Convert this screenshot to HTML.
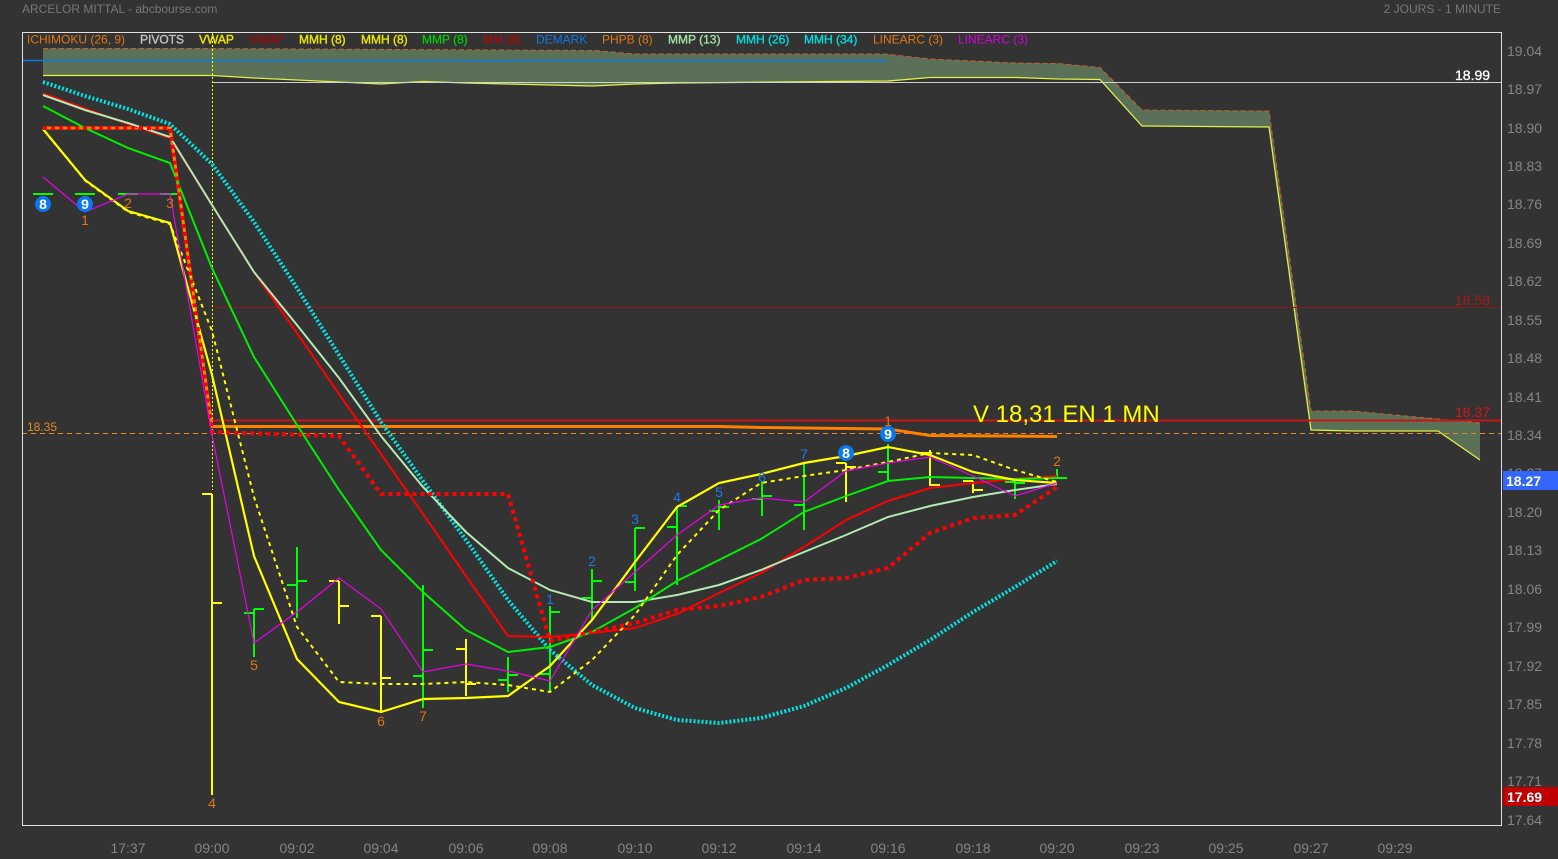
<!DOCTYPE html>
<html><head><meta charset="utf-8">
<style>
html,body{margin:0;padding:0;background:#333;width:1558px;height:859px;overflow:hidden}
svg{display:block;font-family:"Liberation Sans",Arial,sans-serif}
</style></head><body>
<svg width="1558" height="859" viewBox="0 0 1558 859" xmlns="http://www.w3.org/2000/svg">
<rect width="1558" height="859" fill="#333"/>
<text x="22" y="13" font-size="12" fill="#777">ARCELOR MITTAL - abcbourse.com</text>
<text x="1501" y="13" font-size="12" fill="#777" text-anchor="end">2 JOURS - 1 MINUTE</text>

<!-- cloud -->
<path d="M43,48.5 L212,48.5 L595,50.5 L635,54 L885,54 L930,59 L1015,63 L1058,63.5 L1100,67.5 L1142,110 L1269,111 L1311,411 L1353,411 L1438,419 L1480,423 L1480,460 L1438,431 L1353,431 L1311,430 L1269,127 L1142,126 L1100,79.5 L1058,79 L1015,77.5 L930,77.5 L888,81 L677,83 L635,84 L592,86 L550,85 L508,84 L466,83 L423,81.5 L381,84 L339,82 L297,80 L254,78 L212,75.5 L43,75.5 Z" fill="#5a7158"/>
<path d="M43,48.5 L212,48.5 L595,50.5 L635,54 L885,54 L930,59 L1015,63 L1058,63.5 L1100,67.5 L1142,110 L1269,111 L1311,411 L1353,411 L1438,419 L1480,423" fill="none" stroke="#c8602e" stroke-width="1" stroke-dasharray="5 3"/>
<path d="M43,75.5 L212,75.5 L254,78 L297,80 L339,82 L381,84 L423,81.5 L466,83 L508,84 L550,85 L592,86 L635,84 L677,83 L888,81 L930,77.5 L1015,77.5 L1058,79 L1100,79.5 L1142,126 L1269,127 L1311,430 L1353,431 L1438,431 L1480,460" fill="none" stroke="#e2f048" stroke-width="1.3"/>

<!-- horizontal levels -->
<path d="M22,60.5 H887" stroke="#0a7ae8" stroke-width="1.4"/>
<g shape-rendering="crispEdges">
<path d="M212,82.5 H1501" stroke="#d0d0d0" stroke-width="1"/>
<path d="M212,307.5 H1501" stroke="#8a1a1a" stroke-width="1"/>
<path d="M212,420.5 H1501" stroke="#c81414" stroke-width="2"/>
<path d="M22,433.5 H1501" stroke="#e08a30" stroke-width="1" stroke-dasharray="5 4"/>
</g>
<path d="M212.5,33 V490" stroke="#ffff00" stroke-width="1" stroke-dasharray="2 2" shape-rendering="crispEdges"/>

<!-- orange thick -->
<path d="M43,128 L170,128 L212,426.5 L720,426.5 L762,427.5 L846,428.5 L888,429 L930,435.5 L1057,436.5" fill="none" stroke="#ff8000" stroke-width="3"/>

<!-- bars -->
<g fill="none" stroke-width="2" shape-rendering="crispEdges">
<g stroke="#00ff00" stroke-width="2">
<path d="M33,194H53M75,194H95M118,194H138M160,194H180"/>
<path d="M254,609V657M244,613H254M254,609H264"/>
<path d="M297,547V618M287,585H297M297,581H307"/>
<path d="M423,585V708M413,676H423M423,650H433"/>
<path d="M508,657V692M498,680H508M508,675H518"/>
<path d="M550,606V692M540,674H550M550,612H560"/>
<path d="M592,569V620M582,598H592M592,581H602"/>
<path d="M635,528V591M625,582H635M635,528H645"/>
<path d="M677,506V585M667,527H677M677,506H687"/>
<path d="M719,500V530M709,511H719M719,507H729"/>
<path d="M762,482V516M752,499H762M762,496H772"/>
<path d="M804,463V530M794,505H804"/>
<path d="M888,444V480M878,472H888"/>
<path d="M1015,480V499M1005,482H1015M1015,483H1025"/>
<path d="M1057,469V478M1047,478H1067"/>
</g>
<g stroke="#ffff00">
<path d="M212,494V795M202,494H212M212,603H222"/>
<path d="M339,581V624M329,581H339M339,606H349"/>
<path d="M381,616V712M371,616H381M381,678H391"/>
<path d="M466,639V696M456,649H466M466,684H476"/>
<path d="M846,463V502M836,463H846M846,467H856"/>
<path d="M930,450V486M920,453H930M930,485H940"/>
<path d="M973,481V493M963,481H973M973,490H983"/>
</g>
</g>

<!-- MMH 34 cyan -->
<path d="M43,82 L85,96 L128,109 L170,124 L212,164 L254,222 L297,288 L339,355 L381,422 L423,481 L466,540 L508,600 L550,650 L592,685 L635,708 L677,720 L719,723 L761,718 L804,706 L846,688 L888,665 L930,640 L973,612 L1015,587 L1057,561" fill="none" stroke="#00e6e6" stroke-width="4" stroke-dasharray="2 2"/>
<!-- MM red -->
<path d="M43,93.5 L128,124 L170,138 L212,205 L254,272 L297,333 L339,394 L381,454 L423,514 L466,576 L508,636 L550,637 L592,633 L635,628 L677,614 L719,593 L761,573 L804,547 L846,520 L888,501 L930,488 L973,483 L1015,479 L1057,476" fill="none" stroke="#ff0000" stroke-width="2"/>
<!-- MMP 13 -->
<path d="M43,95 L85,110 L128,123 L170,137 L212,205 L254,272 L297,325 L339,378 L381,436 L423,487 L466,532 L508,568 L550,590 L592,602 L635,602 L677,595 L719,585 L761,570 L804,552 L846,535 L888,517 L930,506 L973,497 L1015,490 L1057,484" fill="none" stroke="#b4e8b4" stroke-width="2"/>
<!-- MMP 8 -->
<path d="M43,106 L85,128 L128,148 L170,163 L212,268 L254,357 L297,425 L339,490 L381,550 L423,592 L466,630 L508,652 L550,647 L592,632 L635,608 L677,581 L719,560 L761,539 L804,512 L846,496 L888,481 L930,477 L973,478 L1015,479 L1057,478" fill="none" stroke="#00f000" stroke-width="2"/>
<!-- yellow dashed -->
<path d="M43.6,130 L85.6,181 L128.4,212 L170,224 L212,331 L254,497 L297,627 L339,682 L381,684 L423,684 L466,682 L508,685 L550,692 L592,660 L635,615 L677,555 L719,510 L761,483 L804,476 L846,470 L888,462 L930,453 L973,455 L1015,470 L1057,482" fill="none" stroke="#ffff00" stroke-width="2" stroke-dasharray="4 4"/>
<!-- yellow thick -->
<path d="M43,129 L85,180 L128,211 L170,223 L212,375 L254,556 L297,659 L339,702 L381,712 L423,699 L466,698 L508,696 L550,666 L592,620 L635,562 L677,507 L719,483 L761,474 L804,463 L846,456 L888,447 L930,455 L973,472 L1015,480 L1057,483" fill="none" stroke="#ffff00" stroke-width="2.2"/>
<!-- red dotted -->
<path d="M43,128 L170,128 L212,432 L339,436 L381,494 L508,494 L550,641 L592,632 L635,623 L677,610 L719,606 L761,597 L804,580 L846,578 L888,568 L930,533 L973,518 L1015,515 L1057,487" fill="none" stroke="#ff0000" stroke-width="4" stroke-dasharray="4 4"/>
<!-- linearc -->
<path d="M43,177 L85,212 L128,194 L170,194 L212,435 L254,643 L297,612 L339,578 L381,609 L423,672 L466,664 L508,671 L550,681 L592,610 L635,572 L677,535 L719,505 L761,498 L804,502 L846,471 L888,463 L930,457 L973,476 L1015,496 L1057,483" fill="none" stroke="#e800e8" stroke-width="1.2"/>

<!-- demark numbers -->
<g font-size="14" text-anchor="middle" fill="#e0750f">
<text x="85" y="225">1</text><text x="128" y="208">2</text><text x="170" y="208">3</text><text x="212" y="808">4</text>
<text x="254" y="670">5</text><text x="381" y="726">6</text><text x="423" y="721">7</text>
<text x="888" y="426">1</text><text x="1057" y="466">2</text>
</g>
<g font-size="14" text-anchor="middle" fill="#1a78e8">
<text x="550" y="604">1</text><text x="592" y="566">2</text><text x="635" y="524">3</text><text x="677" y="502">4</text>
<text x="719" y="497">5</text><text x="762" y="482">6</text><text x="804" y="459">7</text>
</g>
<g fill="#0a78ee">
<circle cx="43" cy="204" r="8"/><circle cx="85" cy="204" r="8"/><circle cx="846" cy="453" r="8"/><circle cx="888" cy="434" r="8"/>
</g>
<g font-size="14" font-weight="bold" text-anchor="middle" fill="#fff">
<text x="43" y="209">8</text><text x="85" y="209">9</text><text x="846" y="458">8</text><text x="888" y="439">9</text>
</g>

<!-- frame -->
<rect x="22.5" y="32.5" width="1479" height="793" fill="none" stroke="#e0e0e0" stroke-width="1" shape-rendering="crispEdges"/>

<!-- legend -->
<g font-size="12">
<text x="27" y="43.5" fill="#e27810">ICHIMOKU (26, 9)</text>
<text x="140" y="43.5" fill="#c0c0c0" stroke="#c0c0c0" stroke-width=".4">PIVOTS</text>
<text x="199" y="43.5" fill="#e6e600" stroke="#e6e600" stroke-width=".4">VWAP</text>
<text x="249" y="43.5" fill="#b80000">VWAP</text>
<text x="299" y="43.5" fill="#e6e600" stroke="#e6e600" stroke-width=".4">MMH (8)</text>
<text x="361" y="43.5" fill="#e6e600" stroke="#e6e600" stroke-width=".4">MMH (8)</text>
<text x="422" y="43.5" fill="#00d000" stroke="#00d000" stroke-width=".25">MMP (8)</text>
<text x="483" y="43.5" fill="#c40000">MM (8)</text>
<text x="536" y="43.5" fill="#0a78e8">DEMARK</text>
<text x="602" y="43.5" fill="#e27810">PHPB (8)</text>
<text x="668" y="43.5" fill="#a5e0a5" stroke="#a5e0a5" stroke-width=".35">MMP (13)</text>
<text x="736" y="43.5" fill="#00dcdc" stroke="#00dcdc" stroke-width=".35">MMH (26)</text>
<text x="804" y="43.5" fill="#00dcdc" stroke="#00dcdc" stroke-width=".35">MMH (34)</text>
<text x="873" y="43.5" fill="#e27810">LINEARC (3)</text>
<text x="958" y="43.5" fill="#d800d8">LINEARC (3)</text>
</g>

<!-- annotations -->
<text x="27" y="431" font-size="12" fill="#e08a20">18.35</text>
<text x="973" y="422" font-size="24" fill="#ffff00">V 18,31 EN 1 MN</text>
<text x="1455" y="80" font-size="14" fill="#fff" stroke="#fff" stroke-width=".3">18.99</text>
<text x="1455" y="305" font-size="14" fill="#a01c1c">18.58</text>
<text x="1455" y="417" font-size="14" fill="#d81414">18.37</text>

<!-- y axis -->
<g font-size="14" fill="#858585">
<text x="1507" y="56">19.04</text><text x="1507" y="94">18.97</text><text x="1507" y="133">18.90</text><text x="1507" y="171">18.83</text>
<text x="1507" y="209">18.76</text><text x="1507" y="248">18.69</text><text x="1507" y="286">18.62</text><text x="1507" y="325">18.55</text>
<text x="1507" y="363">18.48</text><text x="1507" y="402">18.41</text><text x="1507" y="440">18.34</text><text x="1507" y="478">18.27</text>
<text x="1507" y="517">18.20</text><text x="1507" y="555">18.13</text><text x="1507" y="594">18.06</text><text x="1507" y="632">17.99</text>
<text x="1507" y="671">17.92</text><text x="1507" y="709">17.85</text><text x="1507" y="748">17.78</text><text x="1507" y="786">17.71</text>
<text x="1507" y="825">17.64</text>
</g>
<rect x="1503" y="471" width="55" height="19" fill="#3366ff"/>
<text x="1506" y="486" font-size="14" font-weight="bold" fill="#fff">18.27</text>
<rect x="1503" y="787" width="55" height="19" fill="#c00000"/>
<text x="1507" y="802" font-size="14" font-weight="bold" fill="#fff">17.69</text>

<!-- x axis -->
<g font-size="14" fill="#858585" text-anchor="middle">
<text x="128" y="853">17:37</text><text x="212" y="853">09:00</text><text x="297" y="853">09:02</text><text x="381" y="853">09:04</text>
<text x="466" y="853">09:06</text><text x="550" y="853">09:08</text><text x="635" y="853">09:10</text><text x="719" y="853">09:12</text>
<text x="804" y="853">09:14</text><text x="888" y="853">09:16</text><text x="973" y="853">09:18</text><text x="1057" y="853">09:20</text>
<text x="1142" y="853">09:23</text><text x="1226" y="853">09:25</text><text x="1311" y="853">09:27</text><text x="1395" y="853">09:29</text>
</g>
</svg>
</body></html>
